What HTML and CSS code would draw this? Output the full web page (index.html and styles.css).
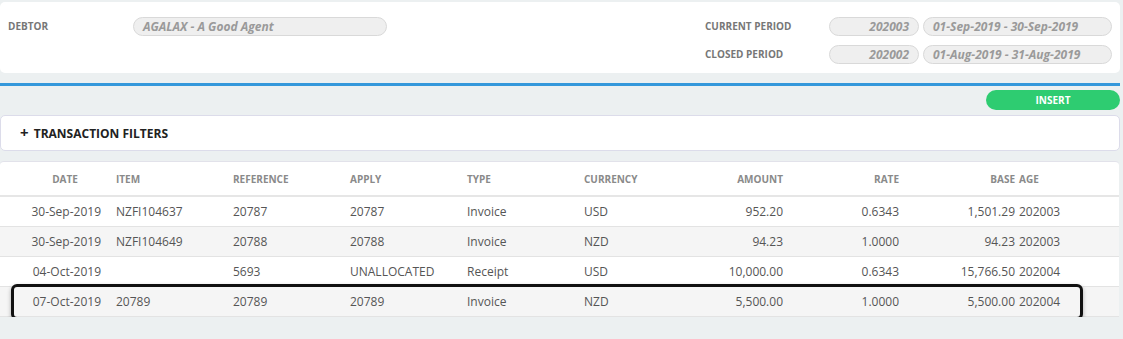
FILE: index.html
```html
<!DOCTYPE html>
<html lang="en">
<head>
    <meta charset="UTF-8">
    <meta name="viewport" content="width=device-width, initial-scale=1.0">
    <title>Debtor Transactions</title>
    <link rel="stylesheet" href="styles.css">
</head>
<body>
    <div class="container">
        <div class="header-card">
            <div class="debtor">
                <span class="label debtor-label">DEBTOR</span>
                <span class="field debtor-field">AGALAX - A Good Agent</span>
            </div>
            <div class="periods">
                <span class="label">CURRENT PERIOD</span>
                <span class="field period">202003</span>
                <span class="field">01-Sep-2019 - 30-Sep-2019</span>
                <span class="label">CLOSED PERIOD</span>
                <span class="field period">202002</span>
                <span class="field">01-Aug-2019 - 31-Aug-2019</span>
            </div>
        </div>
        <div class="divider"></div>
        <div class="actions">
            <button class="insert">INSERT</button>
        </div>
        <div class="filters">
            <span class="plus">+</span> TRANSACTION FILTERS
        </div>
        <div class="table-card">
            <table class="trans">
                <colgroup>
                    <col style="width: 106px">
                    <col style="width: 117px">
                    <col style="width: 117px">
                    <col style="width: 117px">
                    <col style="width: 117px">
                    <col style="width: 117px">
                    <col style="width: 97px">
                    <col style="width: 116px">
                    <col style="width: 111px">
                    <col>
                </colgroup>
                <thead>
                    <tr>
                        <th class="date">DATE</th>
                        <th>ITEM</th>
                        <th>REFERENCE</th>
                        <th>APPLY</th>
                        <th>TYPE</th>
                        <th>CURRENCY</th>
                        <th class="num">AMOUNT</th>
                        <th class="num">RATE</th>
                        <th class="num base">BASE</th>
                        <th class="age">AGE</th>
                    </tr>
                </thead>
                <tbody>
                    <tr>
                        <td class="num">30-Sep-2019</td>
                        <td>NZFI104637</td>
                        <td>20787</td>
                        <td>20787</td>
                        <td>Invoice</td>
                        <td>USD</td>
                        <td class="num">952.20</td>
                        <td class="num">0.6343</td>
                        <td class="num base">1,501.29</td>
                        <td class="age">202003</td>
                    </tr>
                    <tr>
                        <td class="num">30-Sep-2019</td>
                        <td>NZFI104649</td>
                        <td>20788</td>
                        <td>20788</td>
                        <td>Invoice</td>
                        <td>NZD</td>
                        <td class="num">94.23</td>
                        <td class="num">1.0000</td>
                        <td class="num base">94.23</td>
                        <td class="age">202003</td>
                    </tr>
                    <tr>
                        <td class="num">04-Oct-2019</td>
                        <td></td>
                        <td>5693</td>
                        <td>UNALLOCATED</td>
                        <td>Receipt</td>
                        <td>USD</td>
                        <td class="num">10,000.00</td>
                        <td class="num">0.6343</td>
                        <td class="num base">15,766.50</td>
                        <td class="age">202004</td>
                    </tr>
                    <tr>
                        <td class="num">07-Oct-2019</td>
                        <td>20789</td>
                        <td>20789</td>
                        <td>20789</td>
                        <td>Invoice</td>
                        <td>NZD</td>
                        <td class="num">5,500.00</td>
                        <td class="num">1.0000</td>
                        <td class="num base">5,500.00</td>
                        <td class="age">202004</td>
                    </tr>
                </tbody>
            </table>
            <div class="selected"></div>
        </div>
    </div>
</body>
</html>
```

FILE: styles.css
```css
body {
    font-family: "Open Sans", "Liberation Sans", sans-serif;
    margin: 0;
    padding: 0;
    background-color: #ecf0f1;
}
.container {
    width: 1120px;
    padding-top: 2px;
}
.header-card {
    display: flex;
    justify-content: space-between;
    align-items: flex-start;
    height: 71px;
    box-sizing: border-box;
    padding: 15px 8px 0 8px;
    background: #fff;
    border-radius: 5px;
}
.label {
    font-size: 10px;
    font-weight: 700;
    color: #777;
    line-height: 19px;
}
.debtor {
    display: flex;
    align-items: flex-start;
}
.debtor-label {
    width: 125px;
}
.field {
    display: block;
    height: 19px;
    box-sizing: border-box;
    border: 1px solid #d9d9d9;
    border-radius: 10px;
    background: #efefef;
    color: #9a9a9a;
    font-size: 12px;
    font-weight: 700;
    font-style: italic;
    line-height: 17px;
    padding: 0 9px;
    white-space: nowrap;
}
.debtor-field {
    width: 254px;
}
.periods {
    display: grid;
    grid-template-columns: 120px 90px 189px;
    column-gap: 4px;
    row-gap: 9px;
}
.period {
    text-align: right;
}
.divider {
    height: 3px;
    margin-top: 10px;
    background: #3498db;
}
.actions {
    display: flex;
    justify-content: flex-end;
    padding: 4px 0 5px 0;
}
.insert {
    width: 134px;
    height: 20px;
    border: none;
    border-radius: 10px;
    background: #2ecc71;
    color: #fff;
    font-family: inherit;
    font-size: 10px;
    font-weight: 700;
    padding: 0;
    cursor: pointer;
}
.filters {
    height: 36px;
    box-sizing: border-box;
    border: 1px solid #dcdcea;
    border-radius: 5px;
    background: #fff;
    padding-left: 19px;
    font-size: 12px;
    font-weight: 700;
    color: #222;
    line-height: 33px;
}
.plus {
    font-size: 15px;
    margin-right: 2px;
}
.table-card {
    position: relative;
    margin-top: 10px;
    width: 1119px;
    background: #fff;
    border-radius: 4px 4px 0 0;
    border-top: 1px solid #e2e2ea;
}
.trans {
    width: 100%;
    border-collapse: collapse;
    table-layout: fixed;
}
.trans th {
    height: 33px;
    font-size: 10px;
    font-weight: 700;
    color: #8a8a8a;
    text-align: left;
    padding: 0 0 0 10px;
    border-bottom: 2px solid #e6e6e6;
}
.trans td {
    height: 29px;
    padding: 0 0 0 10px;
    font-size: 12px;
    color: #555;
    border-bottom: 1px solid #e3e3e3;
    white-space: nowrap;
}
.trans tbody tr:nth-child(even) {
    background: #f5f5f5;
}
.trans th.num, .trans td.num {
    text-align: right;
    padding: 0 5px 0 0;
}
.trans th.date {
    text-align: center;
    padding: 0 0 0 24px;
}
.trans th.base, .trans td.base {
    padding-right: 0;
}
.trans th.age, .trans td.age {
    padding-left: 4px;
}
.selected {
    position: absolute;
    left: 11px;
    top: 122px;
    width: 1072px;
    height: 36px;
    box-sizing: border-box;
    border: 3px solid #111;
    border-radius: 6px;
    box-shadow: 0 2px 4px rgba(0, 0, 0, 0.3);
}
```
